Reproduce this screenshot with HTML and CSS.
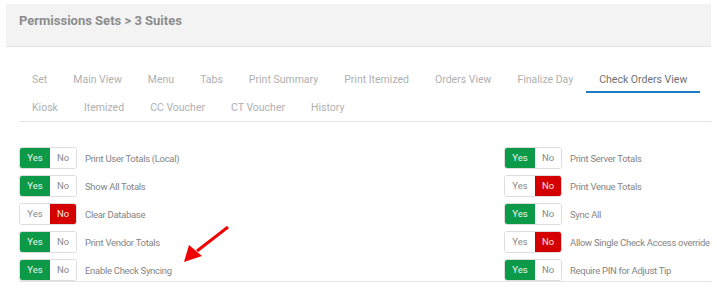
FILE: index.html
```html
<!DOCTYPE html>
<html lang="en">
  <head>
    <meta charset="UTF-8" />
    <meta name="viewport" content="width=device-width, initial-scale=1.0" />
    <title>Permissions Sets - 3 Suites</title>
    <link rel="stylesheet" href="styles.css">
  </head>
  <body>
    <div class="page">
      <header class="page-header">
        <h1>Permissions Sets &gt; 3 Suites</h1>
      </header>

      <section class="content">
        <nav class="tabs">
          <div class="tab-row">
            <a class="tab">Set</a>
            <a class="tab">Main View</a>
            <a class="tab">Menu</a>
            <a class="tab">Tabs</a>
            <a class="tab">Print Summary</a>
            <a class="tab">Print Itemized</a>
            <a class="tab">Orders View</a>
            <a class="tab">Finalize Day</a>
            <a class="tab active">Check Orders View</a>
          </div>
          <div class="tab-row">
            <a class="tab">Kiosk</a>
            <a class="tab">Itemized</a>
            <a class="tab">CC Voucher</a>
            <a class="tab">CT Voucher</a>
            <a class="tab">History</a>
          </div>
        </nav>

        <div class="settings">
          <div class="col">
            <div class="setting">
              <div class="toggle"><span class="yes on">Yes</span><span class="no">No</span></div>
              <span class="label">Print User Totals (Local)</span>
            </div>
            <div class="setting">
              <div class="toggle"><span class="yes on">Yes</span><span class="no">No</span></div>
              <span class="label">Show All Totals</span>
            </div>
            <div class="setting">
              <div class="toggle"><span class="yes">Yes</span><span class="no on">No</span></div>
              <span class="label">Clear Database</span>
            </div>
            <div class="setting">
              <div class="toggle"><span class="yes on">Yes</span><span class="no">No</span></div>
              <span class="label">Print Vendor Totals</span>
            </div>
            <div class="setting">
              <div class="toggle"><span class="yes on">Yes</span><span class="no">No</span></div>
              <span class="label">Enable Check Syncing</span>
            </div>
          </div>
          <div class="col">
            <div class="setting">
              <div class="toggle"><span class="yes on">Yes</span><span class="no">No</span></div>
              <span class="label">Print Server Totals</span>
            </div>
            <div class="setting">
              <div class="toggle"><span class="yes">Yes</span><span class="no on">No</span></div>
              <span class="label">Print Venue Totals</span>
            </div>
            <div class="setting">
              <div class="toggle"><span class="yes on">Yes</span><span class="no">No</span></div>
              <span class="label">Sync All</span>
            </div>
            <div class="setting">
              <div class="toggle"><span class="yes">Yes</span><span class="no on">No</span></div>
              <span class="label">Allow Single Check Access override</span>
            </div>
            <div class="setting">
              <div class="toggle"><span class="yes on">Yes</span><span class="no">No</span></div>
              <span class="label">Require PIN for Adjust Tip</span>
            </div>
          </div>

          <!-- annotation arrow pointing at "Enable Check Syncing" -->
          <svg class="arrow" width="60" height="50" viewBox="0 0 60 50">
            <line x1="49" y1="1" x2="18" y2="25" stroke="#f00000" stroke-width="3" />
            <polygon points="5,36 10,19 23,30" fill="#f00000" />
          </svg>
        </div>
      </section>
    </div>
  </body>
</html>
```

FILE: styles.css
```css
body {
  margin: 0;
  font-family: Roboto, "Liberation Sans", sans-serif;
  background: #fff;
}

.page {
  width: 705px;
  padding: 4px 6px 0;
}

.page-header {
  height: 42px;
  background: #f3f3f3;
  border-bottom: 1px solid #e3e3e3;
  padding: 0 13px;
}

.page-header h1 {
  margin: 0;
  padding-top: 9px;
  font-size: 13px;
  font-weight: 700;
  line-height: 16px;
  color: #8c8c8c;
}

.content {
  padding: 18px 0 0 13px;
}

.tabs {
  border-bottom: 1px solid #e4e4e4;
}

.tab-row {
  display: flex;
}

.tab {
  height: 26px;
  line-height: 29px;
  padding: 0 13px;
  font-size: 10.5px;
  color: #b0b0b0;
  border-bottom: 2px solid transparent;
  cursor: pointer;
}

.tab.active {
  color: #707070;
  border-bottom-color: #1f7ac5;
}

.settings {
  position: relative;
  display: grid;
  grid-template-columns: 485px 1fr;
  padding-top: 25px;
  border-bottom: 1px solid #e4e4e4;
}

.col {
  display: flex;
  flex-direction: column;
  gap: 6px;
}

.setting {
  display: flex;
  align-items: center;
  gap: 8px;
  height: 22px;
}

.toggle {
  display: flex;
  flex-shrink: 0;
  height: 20px;
  border: 1px solid #ddd;
  border-radius: 3px;
  overflow: hidden;
}

.toggle span {
  line-height: 20px;
  font-size: 9.5px;
  color: #8a8a8a;
  text-align: center;
  background: #fff;
}

.toggle .yes {
  width: 30px;
}

.toggle .no {
  width: 26px;
}

.toggle .yes.on {
  background: #0c9a48;
  color: #e8f5ec;
}

.toggle .no.on {
  background: #d40000;
  color: #fbe6e6;
}

.label {
  font-size: 9.5px;
  letter-spacing: -0.3px;
  white-space: nowrap;
  color: #858585;
}

.arrow {
  position: absolute;
  left: 160px;
  top: 104px;
}
```
